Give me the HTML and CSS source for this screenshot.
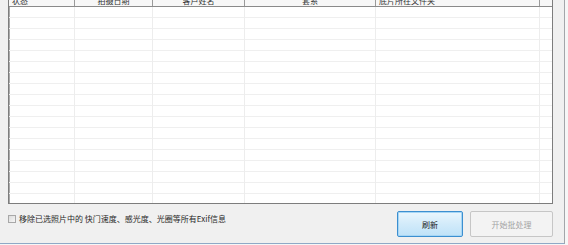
FILE: index.html
```html
<!DOCTYPE html>
<html lang="zh-CN">
<head>
    <meta charset="UTF-8">
    <title>批处理</title>
    <link rel="stylesheet" href="styles.css">
</head>
<body>
    <div class="window">
        <div class="list">
            <div class="list-header">
                <div class="col c1 left">状态</div>
                <div class="col c2">拍摄日期</div>
                <div class="col c3">客户姓名</div>
                <div class="col c4">套系</div>
                <div class="col c5 left">底片所在文件夹</div>
                <div class="col c6"></div>
            </div>
            <div class="list-body">
                <div class="cell c1"></div>
                <div class="cell c2"></div>
                <div class="cell c3"></div>
                <div class="cell c4"></div>
                <div class="cell c5"></div>
                <div class="cell c6"></div>
            </div>
        </div>

        <div class="footer">
            <label class="check">
                <span class="box"></span>
                移除已选照片中的 快门速度、感光度、光圈等所有Exif信息
            </label>
            <div class="buttons">
                <button class="btn primary">刷新</button>
                <button class="btn disabled">开始批处理</button>
            </div>
        </div>
    </div>
</body>
</html>
```

FILE: styles.css
```css
html, body {
    margin: 0;
    padding: 0;
}

body {
    width: 568px;
    height: 245px;
    overflow: hidden;
    background: #f6f6f6;
    font-family: "Noto Sans CJK SC", "Liberation Sans", sans-serif;
    font-size: 8px;
    color: #222222;
}

.window {
    width: 564px;
    height: 243px;
    background: #f0f0f0;
    border-right: 1px solid #a3a6aa;
    border-bottom: 1px solid #8fa9c6;
    overflow: hidden;
}

/* list view, header scrolled just off the top */
.list {
    margin: -10px 0 0 8px;
    width: 543px;
    border: 1px solid #7d7d7d;
    border-top: none;
    box-shadow: inset 1px 0 #a9a9a9;
    background: #ffffff;
}

.list-header {
    display: flex;
    height: 16px;
    background: #f7f7f7;
    border-bottom: 1px solid #8a8a8a;
}

.list-header .col {
    box-sizing: border-box;
    border-right: 1px solid #9a9a9a;
    text-align: center;
    line-height: 11px;
    padding-top: 5px;
    white-space: nowrap;
    color: #333333;
}

.list-header .left {
    text-align: left;
    padding-left: 3px;
}

.c1 { width: 66px; }
.c2 { width: 78px; }
.c3 { width: 92px; }
.c4 { width: 131px; }
.c5 { width: 164px; }
.c6 { flex: 1; }

.list-header .c6 {
    border-right: none;
}

.list-body {
    display: flex;
    height: 196px;
    background: repeating-linear-gradient(to bottom,
        transparent 0, transparent 10px,
        #efefef 10px, #efefef 11px);
}

.cell {
    box-sizing: border-box;
    border-right: 1px solid #ededed;
}

.cell.c6 {
    border-right: none;
}

.footer {
    display: flex;
    justify-content: space-between;
    align-items: flex-start;
    width: 545px;
    margin-left: 8px;
    padding-top: 7px;
}

.check {
    display: flex;
    align-items: center;
    gap: 3px;
    margin-top: 2px;
    white-space: nowrap;
    color: #2a2a2a;
}

.box {
    width: 6px;
    height: 6px;
    border: 1px solid #a8a8a8;
    background: linear-gradient(135deg, #dcdcdc, #f6f6f6);
}

.buttons {
    display: flex;
    gap: 7px;
}

.btn {
    height: 26px;
    padding: 0;
    border-radius: 2px;
    font-family: inherit;
    font-size: 8px;
}

.primary {
    width: 66px;
    border: 1px solid #3c8fd0;
    background: linear-gradient(to bottom, #eaf6fd, #d2ebfa 50%, #bfe2f8);
    box-shadow: inset 0 0 0 1px #a6d6f5;
    color: #1a1a1a;
}

.disabled {
    width: 83px;
    border: 1px solid #c6c6c6;
    background: #f3f3f3;
    color: #a3a3a3;
}
```
